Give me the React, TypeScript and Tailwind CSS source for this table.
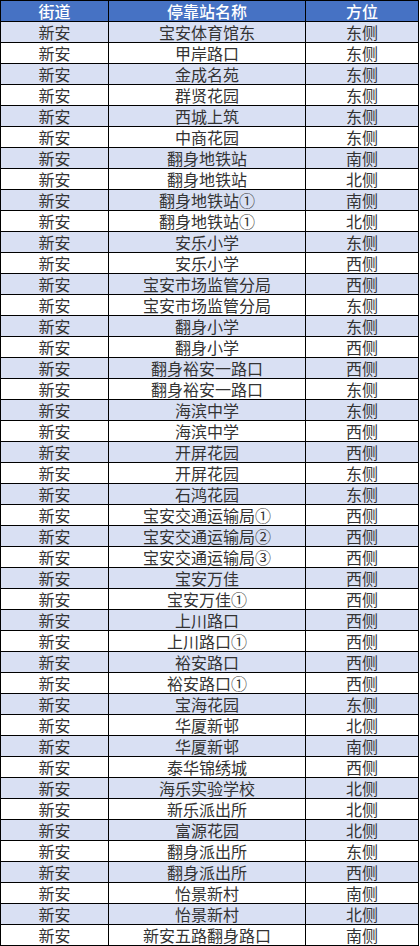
import React from 'react';

type Row = [string, string];

const rows: Row[] = [
  ['宝安体育馆东', '东侧'],
  ['甲岸路口', '东侧'],
  ['金成名苑', '东侧'],
  ['群贤花园', '东侧'],
  ['西城上筑', '东侧'],
  ['中商花园', '东侧'],
  ['翻身地铁站', '南侧'],
  ['翻身地铁站', '北侧'],
  ['翻身地铁站①', '南侧'],
  ['翻身地铁站①', '北侧'],
  ['安乐小学', '东侧'],
  ['安乐小学', '西侧'],
  ['宝安市场监管分局', '西侧'],
  ['宝安市场监管分局', '东侧'],
  ['翻身小学', '东侧'],
  ['翻身小学', '西侧'],
  ['翻身裕安一路口', '西侧'],
  ['翻身裕安一路口', '东侧'],
  ['海滨中学', '东侧'],
  ['海滨中学', '西侧'],
  ['开屏花园', '西侧'],
  ['开屏花园', '东侧'],
  ['石鸿花园', '东侧'],
  ['宝安交通运输局①', '西侧'],
  ['宝安交通运输局②', '西侧'],
  ['宝安交通运输局③', '西侧'],
  ['宝安万佳', '西侧'],
  ['宝安万佳①', '西侧'],
  ['上川路口', '西侧'],
  ['上川路口①', '西侧'],
  ['裕安路口', '西侧'],
  ['裕安路口①', '西侧'],
  ['宝海花园', '东侧'],
  ['华厦新邨', '北侧'],
  ['华厦新邨', '南侧'],
  ['泰华锦绣城', '西侧'],
  ['海乐实验学校', '北侧'],
  ['新乐派出所', '北侧'],
  ['富源花园', '北侧'],
  ['翻身派出所', '东侧'],
  ['翻身派出所', '西侧'],
  ['怡景新村', '南侧'],
  ['怡景新村', '北侧'],
  ['新安五路翻身路口', '南侧'],
];

const cell = 'h-[21px] flex items-center justify-center border-r border-b border-black leading-[17px] pt-px';

export default function App() {
  return (
    <div
      className="w-[420px] h-[946px] bg-white text-[16px]"
      style={{ fontFamily: '"Noto Sans CJK SC", "Noto Sans", sans-serif' }}
    >
      <div className="w-[419px] border-l border-t border-black">
        {/* header */}
        <div className="flex bg-[#4672c4] text-white font-medium">
          <div className={`${cell} w-[108px]`}>街道</div>
          <div className={`${cell} w-[197px]`}>停靠站名称</div>
          <div className={`${cell} w-[113px]`}>方位</div>
        </div>

        {rows.map(([name, side], i) => (
          <div
            key={i}
            className={`flex text-[#333333] ${i % 2 === 0 ? 'bg-[#d9e0f3]' : 'bg-white'}`}
          >
            <div className={`${cell} w-[108px]`}>新安</div>
            <div className={`${cell} w-[197px]`}>{name}</div>
            <div className={`${cell} w-[113px]`}>{side}</div>
          </div>
        ))}
      </div>
    </div>
  );
}
